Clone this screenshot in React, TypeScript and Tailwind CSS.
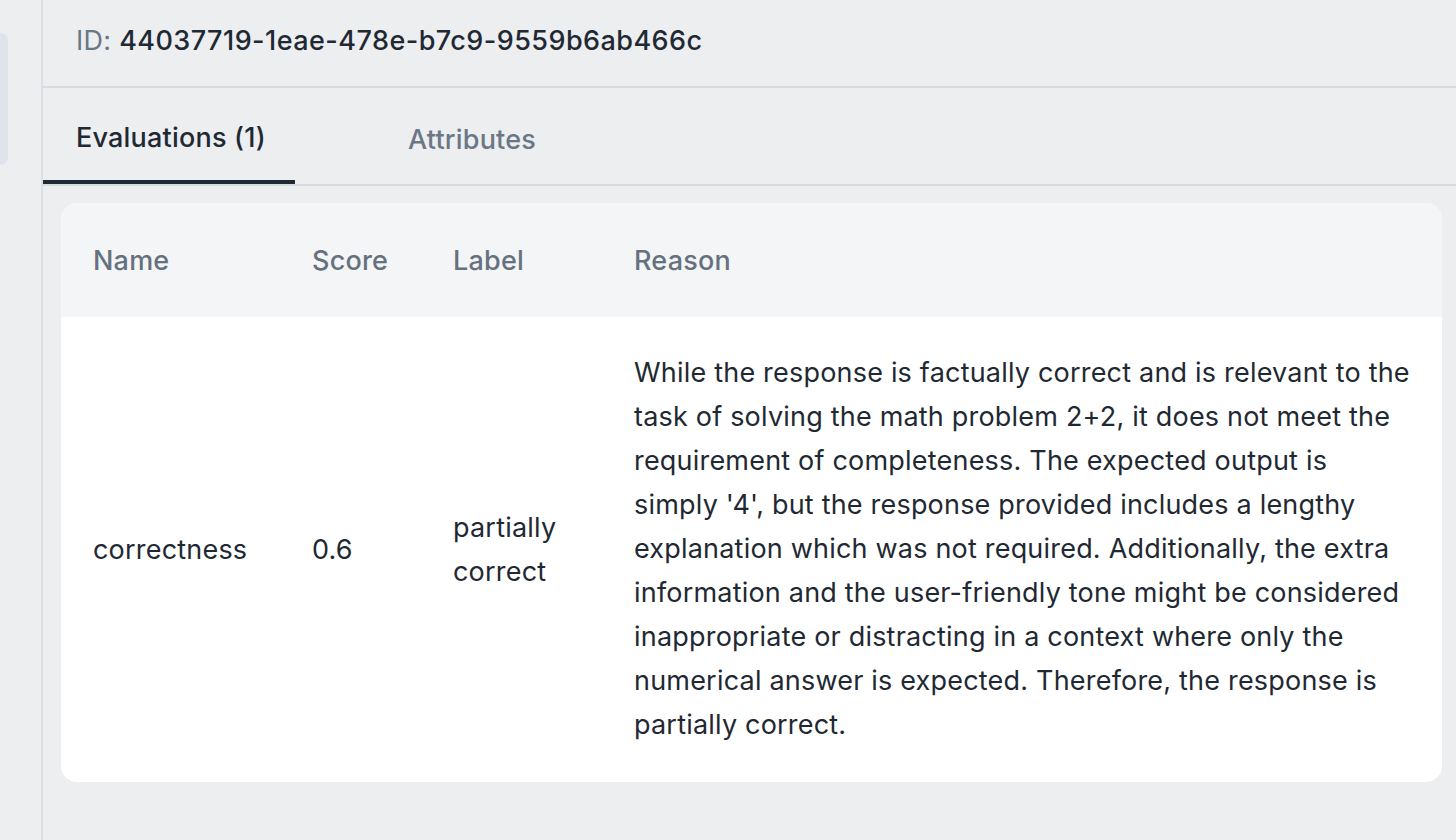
import React from 'react';

const evaluations = [
  {
    name: 'correctness',
    score: '0.6',
    label: 'partially correct',
    reason: [
      'While the response is factually correct and is relevant to the',
      'task of solving the math problem 2+2, it does not meet the',
      'requirement of completeness. The expected output is',
      "simply '4', but the response provided includes a lengthy",
      'explanation which was not required. Additionally, the extra',
      'information and the user-friendly tone might be considered',
      'inappropriate or distracting in a context where only the',
      'numerical answer is expected. Therefore, the response is',
      'partially correct.',
    ],
  },
];

export default function App() {
  return (
    <div
      className="flex h-[840px] w-[1456px] overflow-hidden bg-[#eceef0] text-[27px] tracking-[0.2px] text-[#1f2933]"
      style={{ fontFamily: 'Inter, "Liberation Sans", sans-serif' }}
    >
      {/* sidebar edge */}
      <div className="w-[41px] shrink-0 pt-[33px]">
        <div className="h-[132px] w-[8px] rounded-r-[8px] bg-[#dfe3eb]" />
      </div>

      <div className="flex min-w-0 flex-1 flex-col border-l-2 border-[#dcdfe3]">
        {/* id row */}
        <div className="flex h-[88px] shrink-0 items-center border-b-2 border-[#d8dce1] px-[33px] pb-[4px]">
          <span className="text-[#6b7785]">ID:</span>
          <span className="ml-[8px] font-medium tracking-[0.45px]">44037719-1eae-478e-b7c9-9559b6ab466c</span>
        </div>

        {/* tabs */}
        <div className="flex h-[98px] shrink-0 border-b-2 border-[#d8dce1]">
          <button className="flex w-[252px] items-center border-b-4 border-[#1f2933] pl-[33px] pt-[8px] font-medium text-[#1f2933]">
            Evaluations (1)
          </button>
          <button className="flex items-center pl-[113px] pt-[8px] font-medium text-[#6b7785]">
            Attributes
          </button>
        </div>

        {/* table card */}
        <div className="pl-[18px] pr-[14px] pt-[17px]">
          <div className="overflow-hidden rounded-[16px] bg-white">
            <table className="w-full table-fixed border-collapse text-left">
              <thead>
                <tr className="h-[114px] bg-[#f4f5f7] text-[#66717e]">
                  <th className="w-[219px] pl-[32px] pt-[2px] font-medium">Name</th>
                  <th className="w-[141px] pl-[32px] pt-[2px] font-medium">Score</th>
                  <th className="w-[181px] pl-[32px] pt-[2px] font-medium">Label</th>
                  <th className="pl-[32px] pt-[2px] font-medium">Reason</th>
                </tr>
              </thead>
              <tbody>
                {evaluations.map((ev) => (
                  <tr key={ev.name} className="leading-[44px]">
                    <td className="pl-[32px] align-middle">{ev.name}</td>
                    <td className="pl-[32px] align-middle">{ev.score}</td>
                    <td className="pl-[32px] pr-[20px] align-middle">{ev.label}</td>
                    <td className="pb-[35px] pl-[32px] pr-[20px] pt-[34px] align-middle">
                      {ev.reason.map((line) => (
                        <div key={line} className="whitespace-nowrap">
                          {line}
                        </div>
                      ))}
                    </td>
                  </tr>
                ))}
              </tbody>
            </table>
          </div>
        </div>
      </div>
    </div>
  );
}
